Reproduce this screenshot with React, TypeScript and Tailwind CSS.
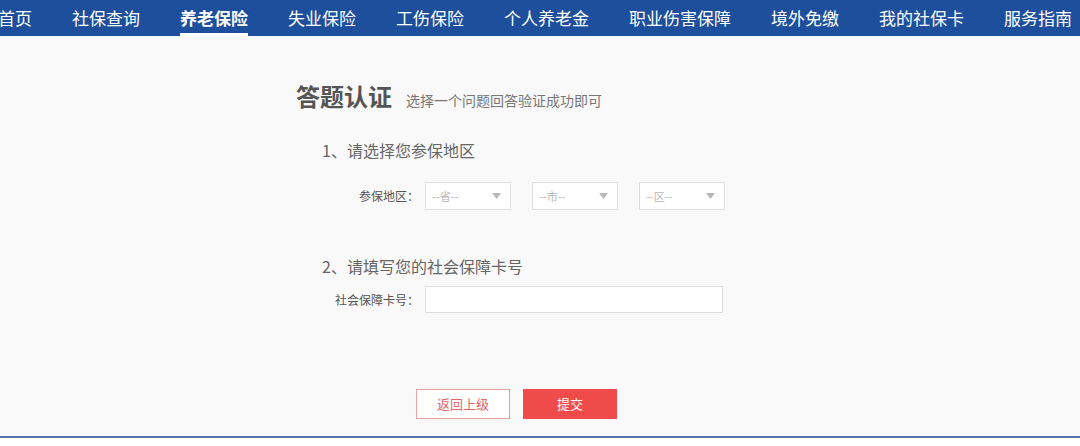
import React from "react";

const navItems = [
  "首页",
  "社保查询",
  "养老保险",
  "失业保险",
  "工伤保险",
  "个人养老金",
  "职业伤害保障",
  "境外免缴",
  "我的社保卡",
  "服务指南",
];

function Select({ text }: { text: string }) {
  return (
    <div className="w-[86px] h-[28px] bg-white border border-[#dedede] flex items-center justify-between pl-[6px] pr-[9px]">
      <span className="text-[11px] text-[#b5b5b5] leading-none">{text}</span>
      <svg width="9" height="6" viewBox="0 0 9 6">
        <path d="M0 0 L9 0 L4.5 6 Z" fill="#b8b8b8" />
      </svg>
    </div>
  );
}

export default function App() {
  return (
    <div
      className="w-[1080px] h-[446px] overflow-hidden bg-white flex flex-col"
      style={{ fontFamily: '"Noto Sans CJK SC", "Noto Sans", sans-serif' }}
    >
      <nav className="h-[36px] bg-[#1d4f9c] flex items-stretch gap-[40px] shrink-0 pl-0 -ml-[2px]">
        {navItems.map((it, i) => (
          <div
            key={it}
            className={
              "flex items-center text-[17px] text-white whitespace-nowrap border-b-[3px] pt-[2px] " +
              (i === 2 ? "border-white font-bold" : "border-transparent")
            }
          >
            {it}
          </div>
        ))}
      </nav>
      <main className="h-[400px] bg-[#f9f9f9] pt-[44px] pl-[296px] flex flex-col shrink-0">
        <div className="flex items-baseline gap-[14px] h-[32px]">
          <span className="text-[24px] leading-[32px] font-bold text-[#555555]">答题认证</span>
          <span className="text-[14px] text-[#777777]">选择一个问题回答验证成功即可</span>
        </div>
        <div className="mt-[26px] pl-[26px] text-[16px] leading-[24px] text-[#666666]">1、请选择您参保地区</div>
        <div className="mt-[20px] flex items-center">
          <div className="w-[125px] text-right text-[12px] text-[#555555] pr-[2px]">参保地区：</div>
          <div className="ml-[4px] flex gap-[21px]">
            <Select text="--省--" />
            <Select text="--市--" />
            <Select text="--区--" />
          </div>
        </div>
        <div className="mt-[44px] pl-[26px] text-[16px] leading-[24px] text-[#666666]">2、请填写您的社会保障卡号</div>
        <div className="mt-[8px] flex items-center">
          <div className="w-[125px] text-right text-[12px] text-[#555555] pr-[2px]">社会保障卡号：</div>
          <div className="ml-[4px] w-[298px] h-[27px] bg-white border border-[#dedede]" />
        </div>
        <div className="mt-[76px] pl-[120px] flex gap-[13px]">
          <button className="w-[94px] h-[30px] border border-[#e3a3a3] bg-white text-[13px] text-[#e26666]">返回上级</button>
          <button className="w-[94px] h-[30px] bg-[#ef4b4b] text-[13px] text-white">提交</button>
        </div>
      </main>
      <div className="h-[2px] bg-[#5a71a6] shrink-0" />
      <div className="flex-1 bg-white" />
    </div>
  );
}
